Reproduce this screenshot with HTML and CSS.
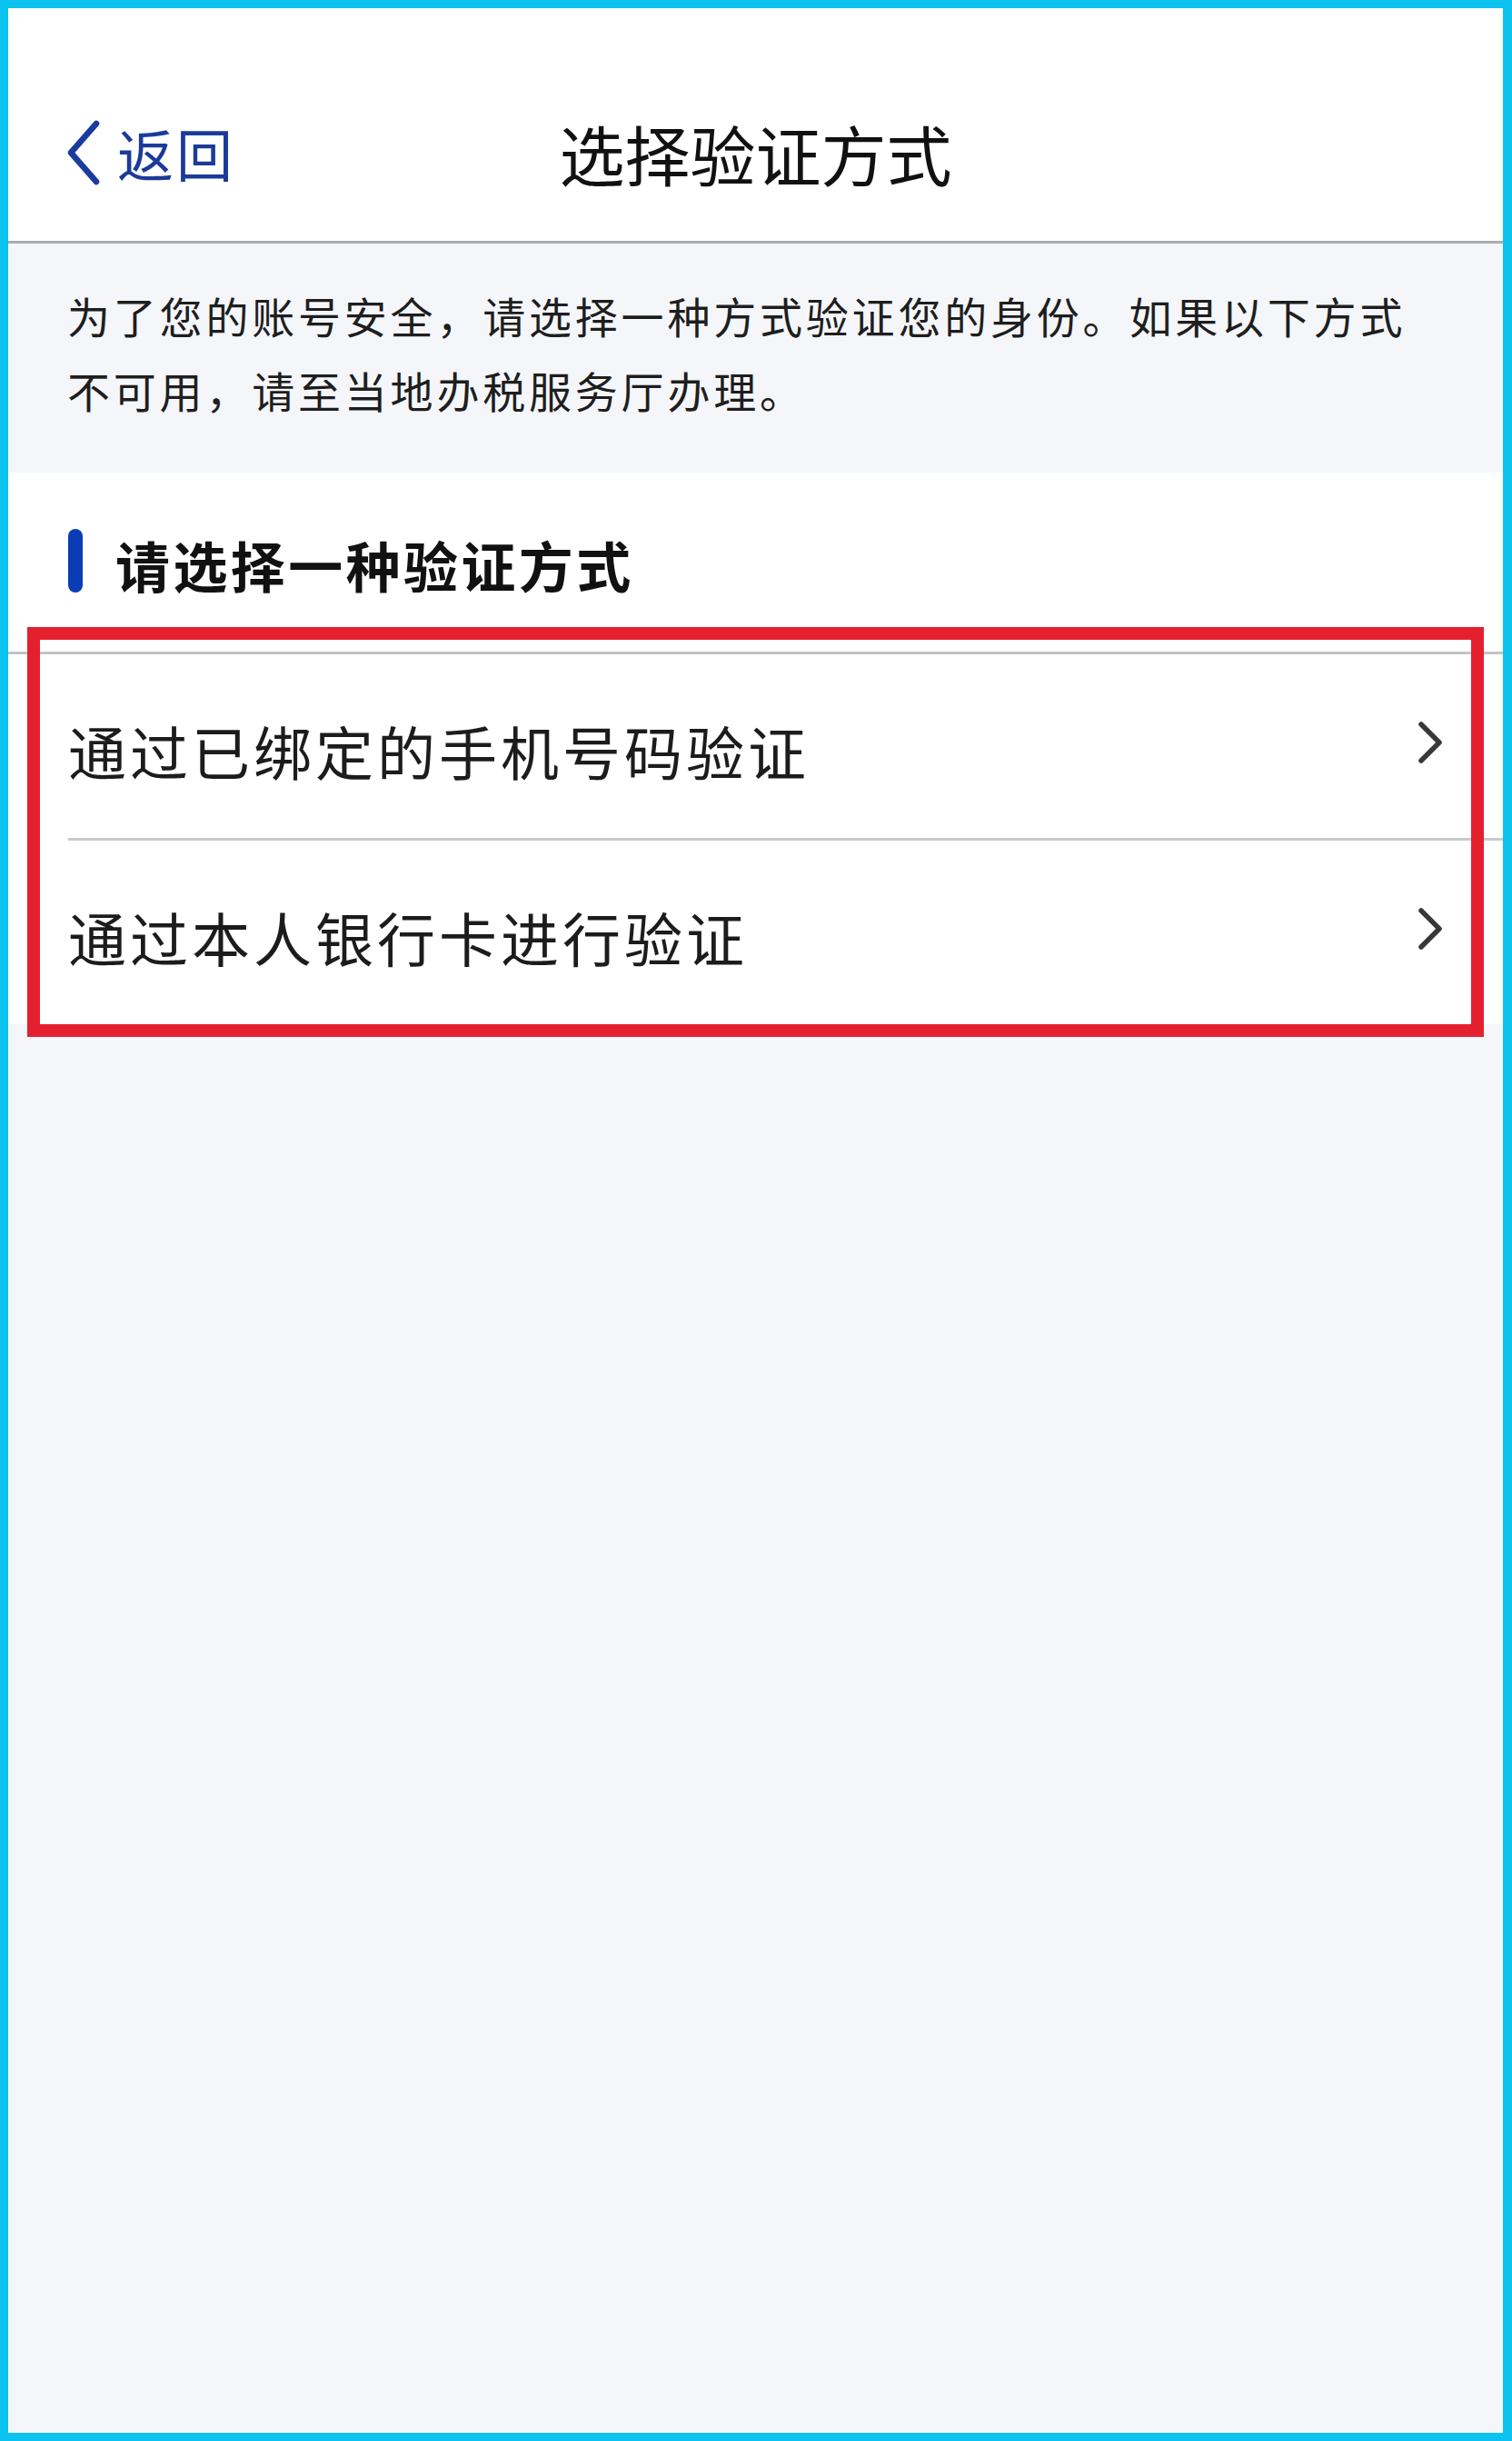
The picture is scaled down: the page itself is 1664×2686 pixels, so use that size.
FILE: index.html
```html
<!DOCTYPE html>
<html lang="zh-CN">

<head>
	<meta charset="UTF-8">
	<meta name="viewport" content="width=device-width, initial-scale=1.0">
	<title>选择验证方式</title>
	<link rel="stylesheet" href="styles.css">
</head>

<body>
	<div class="frame">
		<!-- 顶部导航 -->
		<header class="nav">
			<a class="back" href="#">
				<svg class="back-icon" width="42" height="74" viewBox="0 0 42 74">
					<path d="M35 5 L7 37 L35 69" fill="none" stroke="#1a3c9e" stroke-width="6.5" stroke-linecap="round" stroke-linejoin="round" />
				</svg>
				<span>返回</span>
			</a>
			<h1 class="title">选择验证方式</h1>
		</header>

		<p class="notice">为了您的账号安全，请选择一种方式验证您的身份。如果以下方式不可用，请至当地办税服务厅办理。</p>

		<section class="methods">
			<h2 class="section-title">请选择一种验证方式</h2>
			<div class="method-box">
				<ul class="method-list">
					<li class="method-item">
						<span class="method-name">通过已绑定的手机号码验证</span>
						<svg class="arrow" width="32" height="48" viewBox="0 0 32 48">
							<path d="M6 4 L26 24 L6 44" fill="none" stroke="#38383a" stroke-width="5.5" stroke-linecap="round" stroke-linejoin="round" />
						</svg>
					</li>
					<li class="method-item">
						<span class="method-name">通过本人银行卡进行验证</span>
						<svg class="arrow" width="32" height="48" viewBox="0 0 32 48">
							<path d="M6 4 L26 24 L6 44" fill="none" stroke="#38383a" stroke-width="5.5" stroke-linecap="round" stroke-linejoin="round" />
						</svg>
					</li>
				</ul>
				<!-- 红色标注框 -->
				<div class="highlight"></div>
			</div>
		</section>
	</div>
</body>

</html>
```

FILE: styles.css
```css
* {
	margin: 0;
	padding: 0;
	box-sizing: border-box;
}

body {
	font-family: "Noto Sans CJK SC", "Noto Sans", sans-serif;
	color: #1a1a1a;
	background: #0cc3ef;
}

.frame {
	min-height: 2686px;
	border: 9px solid #0cc3ef;
	border-right-width: 10px;
	background: #f5f6fa;
}

/* 导航栏 */
.nav {
	display: grid;
	grid-template-columns: 1fr auto 1fr;
	align-items: center;
	height: 259px;
	padding-top: 61px;
	background: #fff;
	border-bottom: 3px solid #acacb0;
}

.back {
	display: flex;
	align-items: center;
	gap: 16px;
	padding-left: 62px;
	color: #1b3b99;
	text-decoration: none;
	font-size: 62px;
	letter-spacing: 3px;
}

.back-icon {
	display: block;
}

.title {
	font-size: 72px;
	font-weight: 400;
	color: #111;
	line-height: 1;
}

/* 提示文字 */
.notice {
	padding: 38px 95px 50px 65px;
	font-size: 47px;
	letter-spacing: 3.8px;
	line-height: 82px;
	color: #1e1e1e;
}

.methods {
	background: #fff;
}

.section-title {
	display: flex;
	align-items: center;
	gap: 36px;
	height: 197px;
	padding-left: 66px;
	padding-top: 4px;
	font-size: 60px;
	letter-spacing: 3.4px;
	font-weight: 700;
	color: #111;
}

.section-title::before {
	content: "";
	width: 16px;
	height: 70px;
	margin-top: -8px;
	border-radius: 8px;
	background: #0a3db5;
}

/* 验证方式列表 */
.method-box {
	position: relative;
}

.method-list {
	list-style: none;
	border-top: 3px solid #c4c4c8;
}

.method-item {
	display: flex;
	align-items: center;
	justify-content: space-between;
	height: 202px;
	padding: 0 64px 0 66px;
}

.method-item + .method-item {
	height: 205px;
	border-top: 3px solid #c9c9cd;
	margin-left: 66px;
	padding-left: 0;
}

.method-name {
	padding-top: 8px;
	font-size: 64px;
	letter-spacing: 4px;
	color: #1c1c1c;
}

.arrow {
	display: block;
	margin-bottom: 8px;
}

.highlight {
	position: absolute;
	top: -27px;
	left: 21px;
	right: 21px;
	bottom: -14px;
	border: 14px solid #e5202e;
	pointer-events: none;
}
```
